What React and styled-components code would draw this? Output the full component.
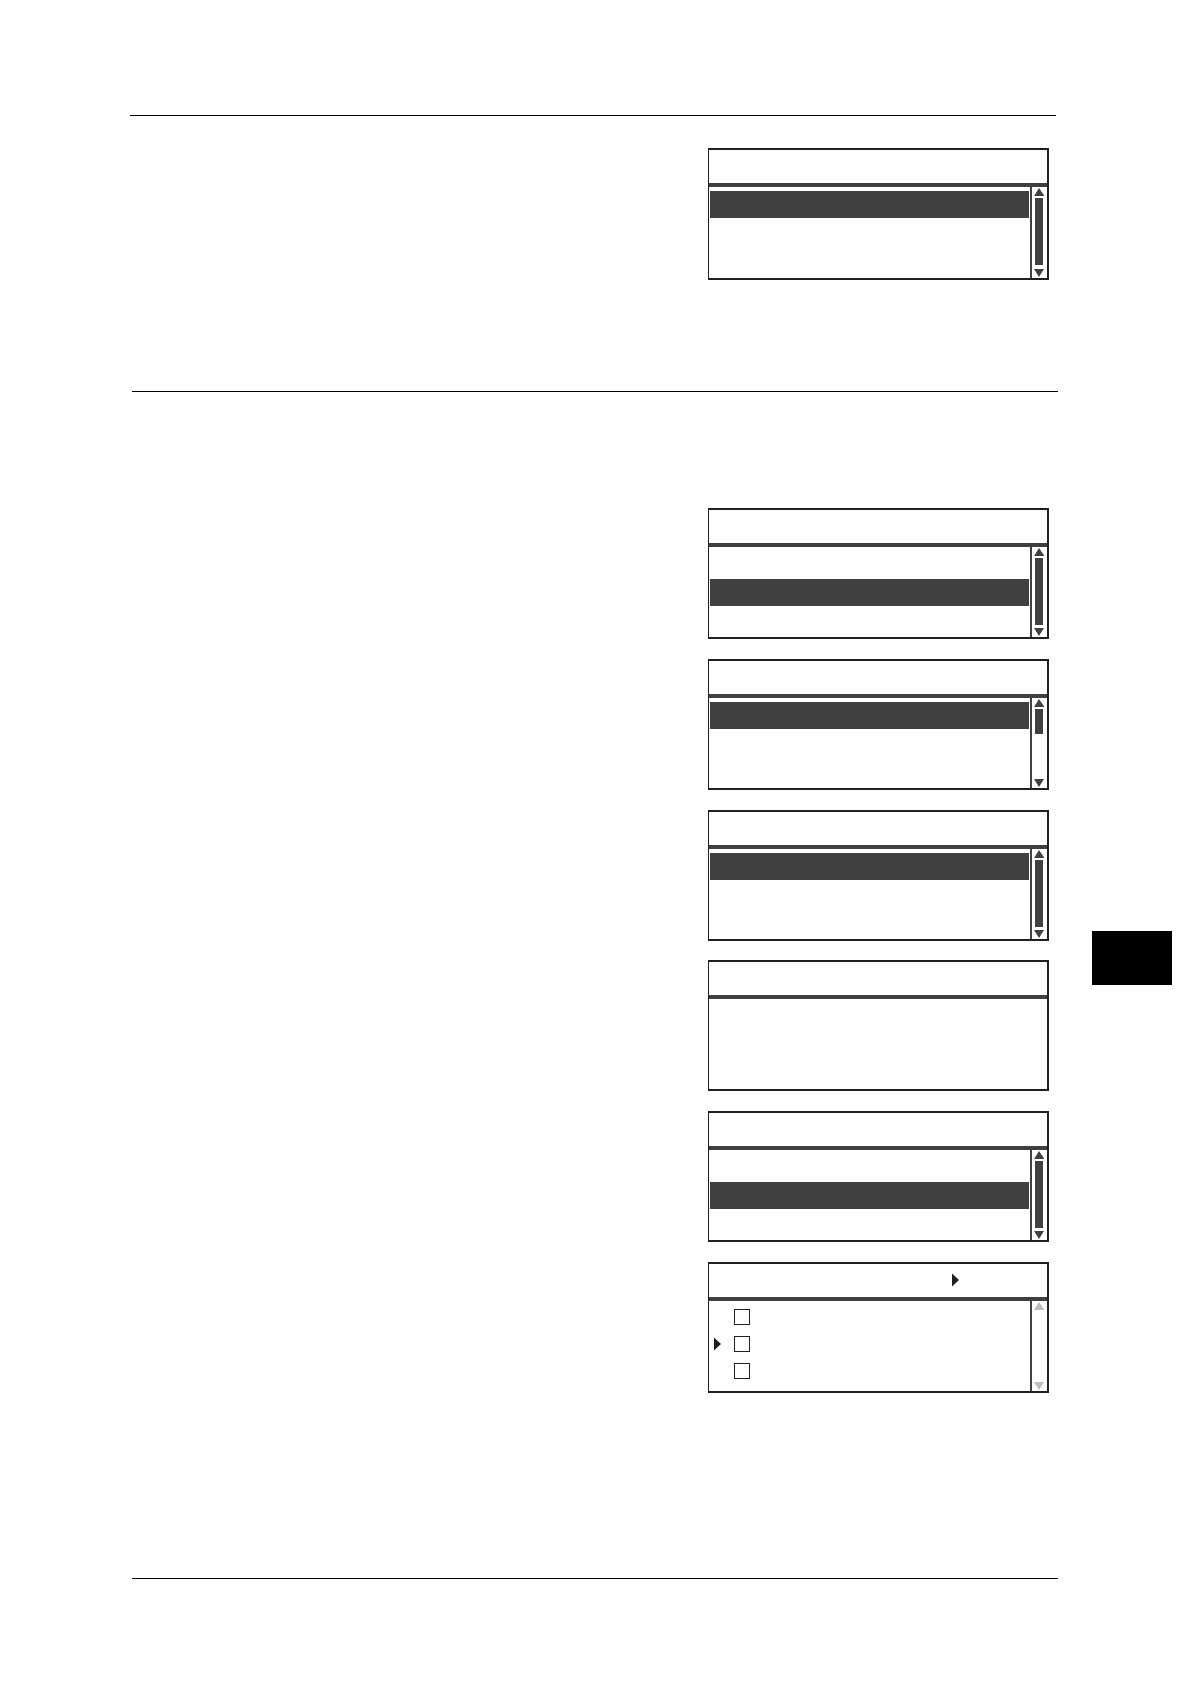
import React from "react";
import styled, { createGlobalStyle } from "styled-components";

const GlobalStyle = createGlobalStyle`
  * {
    box-sizing: border-box;
  }
  body {
    margin: 0;
    background: #fff;
    font-family: "Liberation Sans", Arial, sans-serif;
  }
`;

const Page = styled.main`
  display: flex;
  flex-direction: column;
  padding: 115px 0 105px;
`;

const Rule = styled.hr`
  width: auto;
  height: 1px;
  margin: 0 132px;
  border: 0;
  background: #000;
  &.top {
    margin: 0 134px 0 130px;
  }
`;

const Section = styled.section`
  display: flex;
  justify-content: flex-end;
  align-items: flex-start;
  gap: 43px;
  padding: ${(props) => (props.$intro ? "32px 141px 111px" : "116px 18px 185px")};
`;

const Figures = styled.div`
  display: flex;
  flex-direction: column;
  justify-content: space-between;
  min-height: 885px;
`;

const ChapterTab = styled.aside`
  width: 80px;
  height: 54px;
  margin-top: 423px;
  background: #000;
`;

const Panel = styled.div`
  width: 341px;
  border: 2px solid #231f20;
  border-left-width: 1px;
`;

const PanelHeader = styled.header`
  display: flex;
  align-items: center;
  justify-content: flex-end;
  height: 37px;
  padding-right: 88px;
  border-bottom: 4px solid #404040;
`;

const PanelBody = styled.div`
  display: flex;
  min-height: ${(props) => (props.$tall ? "91px" : "90px")};
`;

const Rows = styled.ul`
  display: flex;
  flex: 1;
  flex-direction: column;
  gap: ${(props) => (props.$checks ? "0" : "1px")};
  margin: 0;
  padding: ${(props) => (props.$checks ? "3px" : "4px")} 1px 0;
  list-style: none;
`;

const Row = styled.li`
  height: 27px;
  background: ${(props) => (props.$active ? "#404040" : "transparent")};
`;

const CheckRow = styled.li`
  display: flex;
  align-items: flex-start;
  gap: 13px;
  height: 27px;
  padding: 5px 4px 0;
`;

const Checkbox = styled.input`
  appearance: none;
  width: 16px;
  height: 16px;
  margin: 0;
  border: 1px solid #231f20;
  background: #fff;
  &:checked {
    background: #404040;
  }
`;

const Marker = styled.svg`
  display: block;
  width: 7px;
  height: 16px;
  fill: #231f20;
  visibility: ${(props) => (props.$hidden ? "hidden" : "visible")};
`;

const Scroll = styled.div`
  display: flex;
  flex-direction: column;
  align-items: flex-start;
  width: 17px;
  padding: 1px 0 1px 2px;
  border-left: 2px solid #404040;
`;

const ScrollButton = styled.button`
  display: block;
  width: 10px;
  height: 8px;
  padding: 0;
  border: 0;
  background: none;
  color: #404040;
  &:disabled {
    color: #bdbdbd;
  }
  svg {
    display: block;
    fill: currentColor;
  }
`;

const Track = styled.div`
  flex: 1;
  width: 8px;
  margin: 2px 1px 3px;
`;

const Thumb = styled.div`
  height: ${(props) => (props.$short ? "25px" : "67px")};
  background: #404040;
`;

function Arrow({ hidden }) {
  return (
    <Marker viewBox="0 0 7 16" $hidden={hidden} aria-hidden="true">
      <path d="M0 1.5 7 8 0 14.5z" />
    </Marker>
  );
}

function Scrollbar({ thumb }) {
  return (
    <Scroll>
      <ScrollButton type="button" aria-label="Scroll up" disabled={!thumb}>
        <svg width="10" height="8" viewBox="0 0 10 8">
          <path d="M5 0 10.5 8H0z" />
        </svg>
      </ScrollButton>
      <Track>{thumb && <Thumb $short={thumb === "short"} />}</Track>
      <ScrollButton type="button" aria-label="Scroll down" disabled={!thumb}>
        <svg width="10" height="8" viewBox="0 0 10 8">
          <path d="M0 0h10L5 8z" />
        </svg>
      </ScrollButton>
    </Scroll>
  );
}

function ListPanel({ active, thumb = "full", tall }) {
  return (
    <Panel>
      <PanelHeader />
      <PanelBody $tall={tall}>
        <Rows>
          {[0, 1, 2].map((i) => (
            <Row key={i} $active={i === active} />
          ))}
        </Rows>
        <Scrollbar thumb={thumb} />
      </PanelBody>
    </Panel>
  );
}

function CheckPanel() {
  return (
    <Panel>
      <PanelHeader>
        <Arrow />
      </PanelHeader>
      <PanelBody>
        <Rows $checks>
          {[0, 1, 2].map((i) => (
            <CheckRow key={i}>
              <Arrow hidden={i !== 1} />
              <Checkbox type="checkbox" aria-label={`Item ${i + 1}`} />
            </CheckRow>
          ))}
        </Rows>
        <Scrollbar />
      </PanelBody>
    </Panel>
  );
}

function App() {
  return (
    <>
      <GlobalStyle />
      <Page>
        <Rule className="top" />
        <Section $intro>
          <ListPanel active={0} tall />
        </Section>
        <Rule />
        <Section>
          <Figures>
            <ListPanel active={1} />
            <ListPanel active={0} thumb="short" />
            <ListPanel active={0} />
            <Panel>
              <PanelHeader />
              <PanelBody />
            </Panel>
            <ListPanel active={1} />
            <CheckPanel />
          </Figures>
          <ChapterTab />
        </Section>
        <Rule />
      </Page>
    </>
  );
}

export default App;
